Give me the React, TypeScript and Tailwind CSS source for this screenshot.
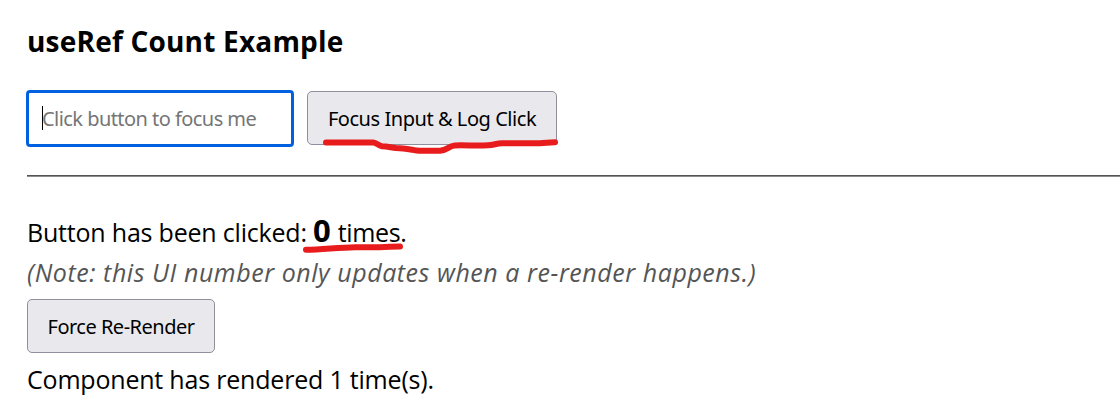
import { useEffect, useRef, useState } from "react";

const buttonClass =
  "h-[54px] shrink-0 rounded-[5px] border border-[#8f8f9d] bg-[#e9e9ed] pt-[2px] text-center font-['Noto_Sans',sans-serif] text-[20px] leading-[50px] whitespace-nowrap text-black";

export default function App() {
  const inputRef = useRef<HTMLInputElement>(null);
  const clicks = useRef(0);
  const [renders, setRenders] = useState(1);

  useEffect(() => {
    inputRef.current?.focus();
  }, []);

  const handleClick = () => {
    clicks.current += 1;
    inputRef.current?.focus();
  };

  return (
    <main className="h-[420px] overflow-hidden bg-white pl-[27px] font-['Open_Sans',sans-serif] text-black">
      <h2 className="pt-[21px] text-[28px] leading-[41px] font-bold tracking-[0.2px] whitespace-nowrap">
        useRef Count Example
      </h2>

      <div className="mt-[28px] flex h-[57px] items-start">
        <div className="relative -ml-px h-[57px] w-[268px] shrink-0">
          <input
            ref={inputRef}
            placeholder="Click button to focus me"
            className="h-[57px] w-full rounded-[4px] border-[3px] border-[#0061e0] bg-white px-[13px] font-['Noto_Sans',sans-serif] text-[20px] tracking-[-0.55px] caret-transparent outline-none placeholder:text-[#757575]"
          />
          <span className="absolute top-[16px] left-[16px] h-[24px] w-px bg-black" />
        </div>
        <div className="relative ml-[13px] mt-px">
          <button onClick={handleClick} className={`${buttonClass} w-[250px] tracking-[-0.45px]`}>
            Focus Input &amp; Log Click
          </button>
          <svg className="pointer-events-none absolute top-[44px] left-[12px]" width="244" height="22" viewBox="319 135 244 22" fill="none">
            <path
              d="M326 142.4H373C377 143 378 145.5 382 146.2C388 146.5 391 147.5 396 148C402 148 408 149 412 149.7C416 151 421 150.8 426 150.8H440C447 150.5 448 146.5 455 145.4C466 145 477 146 488 145.3C494 145 496 143.5 502 143.2H540C546 143 549 142.3 555 142.3"
              stroke="#e81c1c"
              strokeWidth="6"
              strokeLinecap="round"
              strokeLinejoin="round"
            />
          </svg>
        </div>
      </div>

      <hr className="mt-[28px] h-[2px] border-0 border-t border-b border-t-[#545454] border-b-[#8c8c8c]" />

      <p className="relative mt-[35px] h-[41px] text-[25px] leading-[41px] tracking-[-0.2px] whitespace-nowrap">
        Button has been clicked: <strong className="mr-px text-[31px] leading-[30px]">{clicks.current}</strong>
        <span className="tracking-[-0.35px]"> times.</span>
        <svg className="pointer-events-none absolute top-[28px] left-[272px]" width="110" height="16" viewBox="299 240 110 16" fill="none">
          <path
            d="M306 249.8C322 249.5 338 247.6 355 247.2C370 247.7 385 246.8 400 246.6"
            stroke="#e81c1c"
            strokeWidth="6"
            strokeLinecap="round"
          />
        </svg>
      </p>
      <p className="h-[46px] text-[25px] leading-[38px] tracking-[0.55px] whitespace-nowrap text-[#555555] italic">
        (Note: this UI number only updates when a re-render happens.)
      </p>
      <button onClick={() => setRenders(renders + 1)} className={`${buttonClass} block w-[188px] tracking-[-0.5px]`}>
        Force Re-Render
      </button>
      <p className="mt-[8px] text-[25px] leading-[36px] tracking-[-0.2px] whitespace-nowrap">
        Component has rendered {renders} time(s).
      </p>
    </main>
  );
}
